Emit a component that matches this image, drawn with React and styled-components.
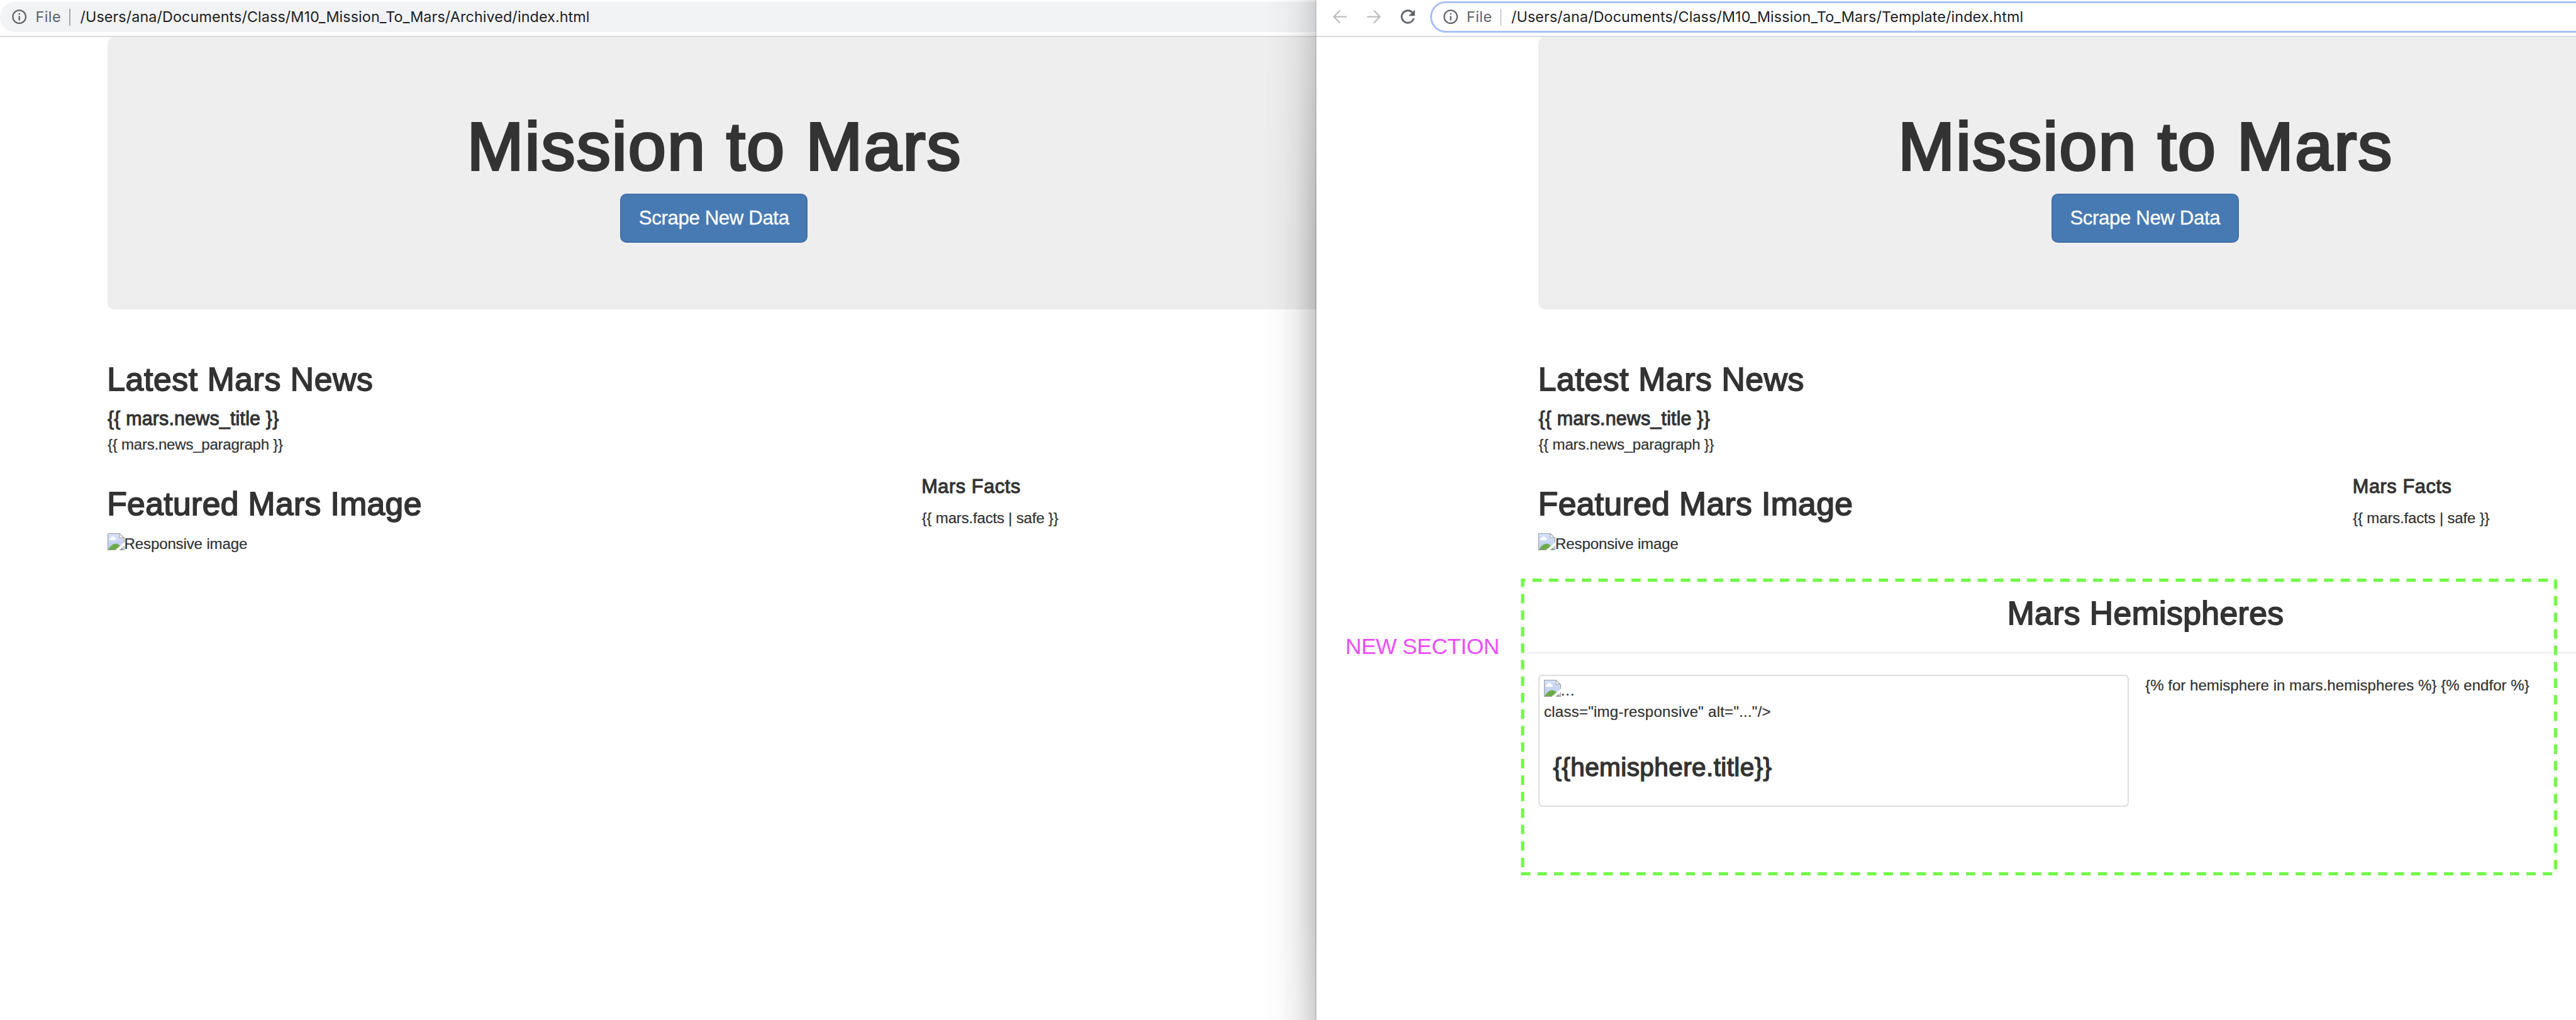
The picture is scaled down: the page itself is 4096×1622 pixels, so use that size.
import React from 'react';
import styled, { createGlobalStyle } from 'styled-components';

/* Design units (4842 wide) to window pixels. */
const u = (n) => `${+((n * 4096) / 4842).toFixed(3)}px`;

const GlobalStyle = createGlobalStyle`
  *, *::before, *::after { box-sizing: border-box; }
  html, body { margin: 0; padding: 0; background: #fff; overflow: hidden; }
`;

const Desktop = styled.div`
  position: relative;
  display: flex;
  width: 4096px;
  height: 1622px;
  overflow: hidden;
  background: #fff;
  color: #333;
  font-family: 'Liberation Sans', Arial, sans-serif;
`;

const Window = styled.section`
  position: relative;
  flex: none;
  width: ${(p) => u(p.$width)};
  height: 100%;
  overflow: hidden;
  background: #fff;
`;

const WindowShadow = styled.div`
  position: absolute;
  top: 0;
  right: 0;
  bottom: 0;
  width: ${u(96)};
  border-right: 1px solid rgba(0, 0, 0, 0.42);
  background: linear-gradient(
    to right,
    rgba(0, 0, 0, 0.004) 0%,
    rgba(0, 0, 0, 0.022) 32%,
    rgba(0, 0, 0, 0.07) 62%,
    rgba(0, 0, 0, 0.14) 82%,
    rgba(0, 0, 0, 0.215) 100%
  );
  mask-image: linear-gradient(to bottom, rgba(0, 0, 0, 0.65) 0, #000 24%, #000 90%, rgba(0, 0, 0, 0.85) 100%);
`;

/* ---------- browser toolbar ---------- */

const Toolbar = styled.header`
  display: flex;
  align-items: flex-start;
  height: ${u(70)};
  border-bottom: 2px solid #dadce0;
`;

const NavButtons = styled.nav`
  display: flex;
  align-items: center;
  gap: ${u(32)};
  flex: none;
  width: ${u(214)};
  height: ${u(63.5)};
  padding-left: ${u(28)};
`;

const NavIcon = styled.svg`
  flex: none;
  width: ${u(32)};
  height: ${u(32)};
  overflow: visible;
  color: ${(p) => (p.$enabled ? '#5f6368' : '#babcbe')};
`;

const Omnibox = styled.div`
  display: flex;
  align-items: center;
  flex: none;
  width: ${u(2700)};
  margin-top: ${(p) => u(p.$focused ? 2 : 4)};
  height: ${(p) => u(p.$focused ? 60 : 56)};
  padding-left: ${(p) => u(p.$focused ? 18.8 : 20.3)};
  border: ${(p) => (p.$focused ? '3.4px solid #a9c1f9' : '0')};
  border-radius: ${u(30)};
  background: ${(p) => (p.$focused ? '#fff' : '#f1f3f4')};
  font-family: Inter, 'Liberation Sans', sans-serif;
  font-size: ${u(27.6)};
  line-height: ${u(48)};
  white-space: pre;
`;

const InfoIcon = styled.svg`
  flex: none;
  width: ${u(32.4)};
  height: ${u(32.4)};
  fill: #5f6368;
`;

const Scheme = styled.span`
  width: ${u(49)};
  margin-left: ${u(14)};
  color: #5f6368;
  letter-spacing: 0.02em;
`;

const Divider = styled.span`
  width: ${u(1.8)};
  height: ${u(32)};
  margin-left: ${u(14.6)};
  background: #a5a8ac;
`;

const Url = styled.span`
  margin-left: ${u(18.6)};
  color: #202124;
  letter-spacing: 0.0042em;
`;

/* ---------- page ---------- */

const Page = styled.main`
  width: ${(p) => u(p.$inset + 2280)};
  padding-left: ${(p) => u(p.$inset)};
`;

const Text = styled.p`
  margin: ${(p) => u(p.$top || 0)} 0 0 ${(p) => u(p.$left || 0)};
  font-size: ${u(28.5)};
  line-height: ${u(40)};
  letter-spacing: ${(p) => p.$track || 0}em;
  -webkit-text-stroke: 0.01em currentColor;
  white-space: pre;
`;

const Heading = styled.h2`
  margin: ${(p) => u(p.$top || 0)} 0 0 ${(p) => u(p.$left || 0)};
  font-size: ${(p) => u(p.$size)};
  line-height: ${(p) => u(p.$line)};
  font-weight: 400;
  letter-spacing: ${(p) => p.$track || 0}em;
  text-align: ${(p) => (p.$center ? 'center' : 'left')};
  -webkit-text-stroke: 0.035em currentColor;
  white-space: pre;
`;

const Jumbotron = styled.div`
  display: flex;
  flex-direction: column;
  align-items: center;
  width: ${u(2280)};
  height: ${u(512)};
  padding-top: ${u(135.8)};
  border-radius: ${u(12)};
  background: #eee;
`;

const ScrapeButton = styled.button`
  display: flex;
  align-items: center;
  justify-content: center;
  width: ${u(352)};
  height: ${u(92)};
  margin-top: ${u(18.2)};
  padding: 0;
  border: 2px solid #3f6fa8;
  border-radius: ${u(12)};
  background: #477ab3;
  color: #fff;
  font-family: inherit;
  font-size: ${u(37)};
  letter-spacing: -0.0136em;
  -webkit-text-stroke: 0.01em currentColor;
  white-space: pre;
`;

const News = styled.section`
  display: flex;
  flex-direction: column;
  padding-top: ${u(99)};
`;

const Columns = styled.div`
  display: flex;
  align-items: flex-start;
  height: ${u(186)};
`;

const Column = styled.section`
  width: ${(p) => (p.$width ? u(p.$width) : 'auto')};
  padding-top: ${(p) => u(p.$top || 0)};
`;

const ImageRow = styled.div`
  display: flex;
  align-items: flex-start;
  height: ${u(40)};
  margin-top: ${(p) => u(p.$top || 0)};
`;

const BrokenIcon = styled.svg`
  flex: none;
  width: ${u(32)};
  height: ${u(32)};
`;

const Rule = styled.hr`
  height: 2px;
  margin: ${u(38.8)} 0 ${u(40)} ${u(-30)};
  border: 0;
  background: #eee;
`;

const Hemispheres = styled.section`
  padding-top: ${u(79.1)};
`;

const HemisphereRow = styled.div`
  display: flex;
  align-items: flex-start;
  gap: ${u(31.4)};
`;

const Thumbnail = styled.article`
  flex: none;
  width: ${u(1109)};
  height: ${u(248)};
  padding: ${u(7.8)};
  border: 2px solid #ddd;
  border-radius: ${u(8)};
`;

/* ---------- annotations drawn over the page ---------- */

const Marker = styled.svg`
  position: absolute;
  left: 0;
  top: 0;
  width: 4096px;
  height: 1622px;
  pointer-events: none;
`;

const MarkerLabel = styled.span`
  position: absolute;
  left: ${u(2528.9)};
  top: ${u(1191.8)};
  color: #ea4ff7;
  font-size: ${u(42)};
  line-height: ${u(48)};
  letter-spacing: -0.015em;
  white-space: pre;
`;

function Broken() {
  return (
    <BrokenIcon viewBox="0 0 32 32">
      <defs>
        <linearGradient id="sky" x1="0" y1="0" x2="0" y2="1">
          <stop offset="0" stopColor="#d6e2f9" />
          <stop offset="1" stopColor="#b9c9ee" />
        </linearGradient>
      </defs>
      <path d="M0.6 0.6H22.4L31.4 9V31.4H0.6Z" fill="url(#sky)" />
      <path d="M4.6 13C2.6 12.6 2.8 9.6 5.6 9.4C6.4 5 12.6 4.6 13.6 8.4C16.4 8.6 16.8 12.4 15.4 13Z" fill="#fff" />
      <path d="M1.2 31C5.5 23.5 10.5 19.4 15 19.4C20.5 19.4 26 25 29 31Z" fill="#6cab4b" />
      <path d="M22.4 0.6V8.4H31.4Z" fill="#fff" />
      <path d="M0.6 0.6H22.4L31.4 9V31.4H0.6ZM22.4 0.6V8.4H31.4" fill="none" stroke="#9a9c9f" strokeWidth="1.2" />
      <path d="M33 15.5V22L20.6 33H12.8Z" fill="#fff" />
    </BrokenIcon>
  );
}

function Address({ path, focused }) {
  return (
    <Omnibox $focused={focused}>
      <InfoIcon viewBox="0 0 24 24">
        <path d="M11 7h2v2h-2zm0 4h2v6h-2zm1-9C6.48 2 2 6.48 2 12s4.48 10 10 10 10-4.48 10-10S17.52 2 12 2zm0 18c-4.41 0-8-3.59-8-8s3.59-8 8-8 8 3.59 8 8-3.59 8-8 8z" />
      </InfoIcon>
      <Scheme>File</Scheme>
      <Divider />
      <Url>{path}</Url>
    </Omnibox>
  );
}

function MarsPage({ inset, children }) {
  return (
    <Page $inset={inset}>
      <Jumbotron>
        <Heading as="h1" $size={128} $line={140} $left={2} $track={0.018} $center>Mission to Mars</Heading>
        <ScrapeButton type="button">Scrape New Data</ScrapeButton>
      </Jumbotron>
      <News>
        <Heading $size={61} $line={66} $left={-0.8} $track={0.0126}>Latest Mars News</Heading>
        <Heading as="h4" $size={36} $line={40} $top={20.2} $track={0.0056}>{'{{ mars.news_title }}'}</Heading>
        <Text $top={8.9} $left={0.2} $track={-0.0108}>{'{{ mars.news_paragraph }}'}</Text>
      </News>
      <Columns>
        <Column $width={1530} $top={58.9}>
          <Heading $size={61} $line={66} $left={-0.8} $track={0.0075}>Featured Mars Image</Heading>
          <ImageRow $top={21}>
            <Broken />
            <Text $left={-0.5} $track={-0.0065}>Responsive image</Text>
          </ImageRow>
        </Column>
        <Column $top={39.2}>
          <Heading as="h4" $size={36.4} $line={40} $left={0} $track={0.018}>Mars Facts</Heading>
          <Text $top={18.8} $left={0.6} $track={-0.0085}>{'{{ mars.facts | safe }}'}</Text>
        </Column>
      </Columns>
      {children}
    </Page>
  );
}

export default function App() {
  return (
    <>
      <GlobalStyle />
      <Desktop>
        <Window $width={2474}>
          <Toolbar>
            <Address path="/Users/ana/Documents/Class/M10_Mission_To_Mars/Archived/index.html" />
          </Toolbar>
          <MarsPage inset={202} />
          <WindowShadow />
        </Window>

        <Window $width={2368}>
          <Toolbar>
            <NavButtons>
              <NavIcon viewBox="0 0 32 32">
                <path d="M27.8 16H5M15.4 5L4.6 16L15.4 27" fill="none" stroke="currentColor" strokeWidth="2.7" strokeLinecap="round" strokeLinejoin="round" />
              </NavIcon>
              <NavIcon viewBox="0 0 32 32">
                <path d="M4.2 16H27M16.6 5L27.4 16L16.6 27" fill="none" stroke="currentColor" strokeWidth="2.7" strokeLinecap="round" strokeLinejoin="round" />
              </NavIcon>
              <NavIcon viewBox="2.3 2.3 19.4 19.4" $enabled>
                <path fill="currentColor" d="M17.65 6.35A7.958 7.958 0 0 0 12 4c-4.42 0-7.99 3.58-7.99 8s3.57 8 7.99 8c3.73 0 6.84-2.55 7.73-6h-2.08A5.99 5.99 0 0 1 12 18c-3.31 0-6-2.69-6-6s2.69-6 6-6c1.66 0 3.14.69 4.22 1.78L13 11h7V4l-2.35 2.35z" />
              </NavIcon>
            </NavButtons>
            <Address focused path="/Users/ana/Documents/Class/M10_Mission_To_Mars/Template/index.html" />
          </Toolbar>
          <MarsPage inset={418}>
            <Hemispheres>
              <Heading $size={61} $line={66} $left={2} $track={0.0085} $center>Mars Hemispheres</Heading>
              <Rule />
              <HemisphereRow>
                <Thumbnail>
                  <ImageRow>
                    <Broken />
                    <Text $left={-0.5} $track={0.036}>...</Text>
                  </ImageRow>
                  <Text $track={0.0088}>{'class="img-responsive" alt="..."/>'}</Text>
                  <Heading as="h3" $size={48} $line={54} $top={57.5} $left={17} $track={0.009}>{'{{hemisphere.title}}'}</Heading>
                </Thumbnail>
                <Text>{'{% for hemisphere in mars.hemispheres %} {% endfor %}'}</Text>
              </HemisphereRow>
            </Hemispheres>
          </MarsPage>
        </Window>

        <Marker viewBox="0 0 4842 1918" preserveAspectRatio="none" fill="none" stroke="#73f74a" strokeWidth="6">
          <path d="M2859 1643H4803" strokeDasharray="17.6 13.38" />
          <path d="M2859 1091H2867" />
          <path d="M2880.4 1091H4803" strokeDasharray="17.6 13.4" />
          <path d="M2862 1088V1103.6" />
          <path d="M2862 1117V1640" strokeDasharray="17.7 13.3" />
          <path d="M4803.5 1090V1640" strokeDasharray="17.7 13.3" />
        </Marker>
        <MarkerLabel>NEW SECTION</MarkerLabel>
      </Desktop>
    </>
  );
}
